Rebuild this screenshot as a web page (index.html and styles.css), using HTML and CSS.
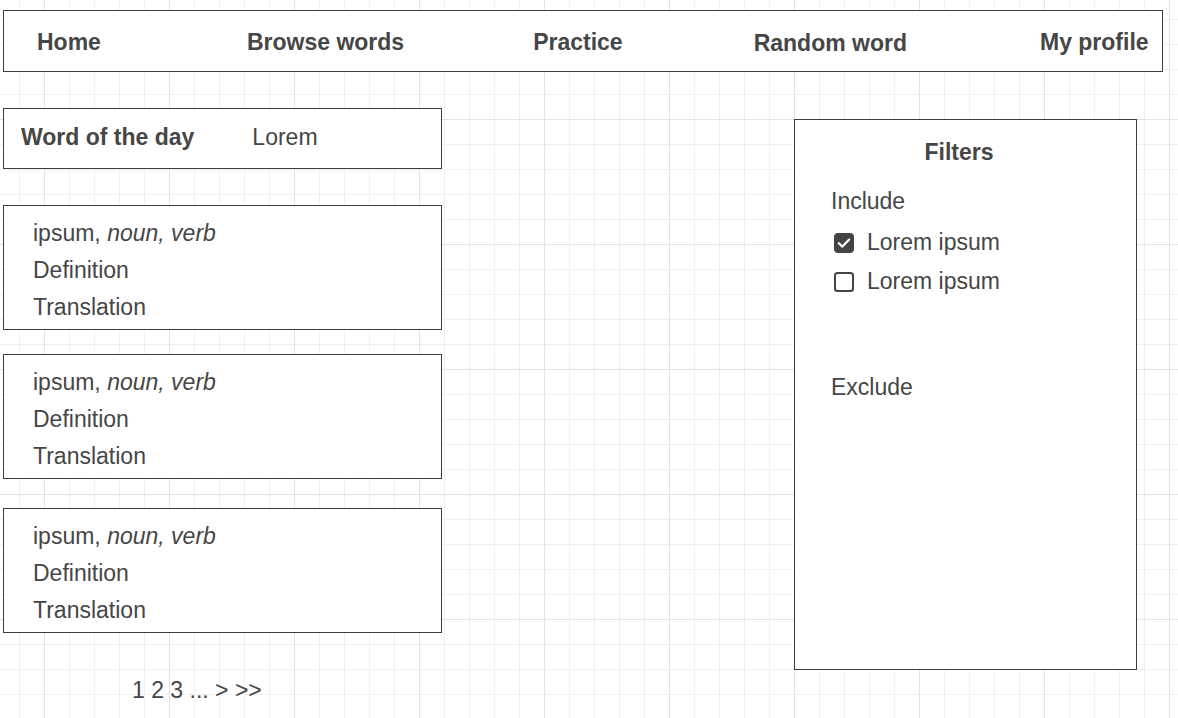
FILE: index.html
```html
<!DOCTYPE html>
<html lang="en">
<head>
<meta charset="utf-8">
<title>Dictionary</title>
<link rel="stylesheet" href="styles.css">
</head>
<body>
<div class="page">
  <nav class="nav">
    <a class="nav-item nav-first">Home</a>
    <a class="nav-item">Browse words</a>
    <a class="nav-item nav-practice">Practice</a>
    <a class="nav-item nav-low">Random word</a>
    <a class="nav-item nav-last">My profile</a>
  </nav>

  <main class="main">
    <section class="left">
      <div class="wotd">
        <span class="wotd-label">Word of the day</span>
        <span class="wotd-word">Lorem</span>
      </div>

      <div class="card">
        <div class="line">ipsum, <em>noun, verb</em></div>
        <div class="line">Definition</div>
        <div class="line">Translation</div>
      </div>
      <div class="card card-second">
        <div class="line">ipsum, <em>noun, verb</em></div>
        <div class="line">Definition</div>
        <div class="line">Translation</div>
      </div>
      <div class="card card-third">
        <div class="line">ipsum, <em>noun, verb</em></div>
        <div class="line">Definition</div>
        <div class="line">Translation</div>
      </div>

      <div class="pager">1 2 3 ... &gt; &gt;&gt;</div>
    </section>

    <aside class="filters">
      <div class="filters-title">Filters</div>
      <div class="group-label">Include</div>
      <div class="options">
        <label class="option">
          <svg class="box" width="20" height="20" viewBox="0 0 20 20">
            <rect x="0.5" y="0.5" width="19" height="19" rx="3" fill="#444" stroke="#444"/>
            <path d="M4.8 10.2 L8.4 13.6 L15.2 6.6" fill="none" stroke="#fff" stroke-width="2.2" stroke-linecap="round" stroke-linejoin="round"/>
          </svg>
          <span>Lorem ipsum</span>
        </label>
        <label class="option">
          <svg class="box" width="20" height="20" viewBox="0 0 20 20">
            <rect x="1" y="1" width="18" height="18" rx="2.5" fill="#fff" stroke="#444" stroke-width="2"/>
          </svg>
          <span>Lorem ipsum</span>
        </label>
      </div>
      <div class="group-label exclude">Exclude</div>
    </aside>
  </main>
</div>
</body>
</html>
```

FILE: styles.css
```css
html {
  background-color: #ffffff;
  background-image:
    linear-gradient(to right, #e3e3e3 1px, transparent 1px),
    linear-gradient(to bottom, #e3e3e3 1px, transparent 1px),
    linear-gradient(to right, #f0f0f0 1px, transparent 1px),
    linear-gradient(to bottom, #f0f0f0 1px, transparent 1px);
  background-size: 125px 125px, 125px 125px, 25px 25px, 25px 25px;
  background-position: 44px 0, 0 119px, 19px 0, 0 19px;
  min-height: 100%;
}

body {
  margin: 0;
  font-family: "Liberation Sans", Arial, sans-serif;
  font-size: 23px;
  color: #464646;
}

.page {
  padding: 10px 15px 0 3px;
}

.nav {
  box-sizing: border-box;
  height: 62px;
  border: 1px solid #3d3d3d;
  background: #fff;
  display: flex;
  align-items: center;
  gap: 131px;
  padding: 2px 0 0 33px;
}

.nav-item {
  font-weight: bold;
  color: #464646;
  white-space: nowrap;
}

.nav-first {
  margin-right: 15px;
}

.nav-practice {
  margin-left: -2px;
}

.nav-last {
  margin-left: 2px;
}

.nav-low {
  position: relative;
  top: 1px;
}

.main {
  display: flex;
  align-items: flex-start;
  margin-top: 36px;
}

.left {
  width: 439px;
  display: flex;
  flex-direction: column;
}

.wotd {
  box-sizing: border-box;
  height: 61px;
  border: 1px solid #3d3d3d;
  background: #fff;
  display: flex;
  align-items: center;
  padding: 0 0 2px 17px;
  gap: 58px;
}

.wotd-label {
  font-weight: bold;
}

.card {
  box-sizing: border-box;
  height: 125px;
  border: 1px solid #3d3d3d;
  background: #fff;
  padding: 9px 0 0 29px;
  margin-top: 36px;
}

.card-second {
  margin-top: 24px;
}

.card-third {
  margin-top: 29px;
}

.line {
  line-height: 37px;
  white-space: nowrap;
}

.line em {
  font-style: italic;
}

.pager {
  margin-top: 39px;
  padding-left: 129px;
  line-height: 37px;
}

.filters {
  box-sizing: border-box;
  width: 343px;
  height: 551px;
  margin-left: 352px;
  margin-top: 11px;
  border: 1px solid #3d3d3d;
  background: #fff;
  padding: 14px 14px 0 36px;
}

.filters-title {
  font-weight: bold;
  text-align: center;
  line-height: 37px;
  margin-left: -35px;
}

.group-label {
  line-height: 37px;
  margin-top: 12px;
}

.options {
  margin-top: 3px;
  padding-left: 3px;
  display: flex;
  flex-direction: column;
}

.option {
  height: 39px;
  display: flex;
  align-items: center;
  gap: 13px;
}

.box {
  display: block;
  flex: none;
}

.exclude {
  margin-top: 68px;
}
```
